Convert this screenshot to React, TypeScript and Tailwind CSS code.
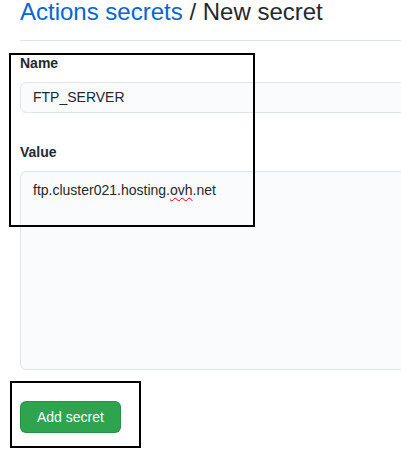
export default function App() {
  return (
    <div className="relative h-[455px] w-[401px] overflow-hidden bg-white font-['Liberation_Sans',Arial,sans-serif] text-[#24292e]">
      <div className="pl-5">
        <h1 className="border-b border-[#e1e4e8] pb-4 text-[24px] leading-none font-normal">
          <span className="text-[#0366d6]">Actions secrets</span> / New secret
        </h1>

        <form className="w-[440px]">
          <div className="mt-3">
            <label className="block text-[14px] leading-[21px] font-bold">Name</label>
            <div className="mt-2 h-[31px] rounded-md border border-[#e1e4e8] bg-[#fafbfc] px-3 text-[14px] leading-[29px]">
              FTP_SERVER
            </div>
          </div>

          <div className="mt-[29px]">
            <label className="block text-[14px] leading-[21px] font-bold">Value</label>
            <div className="mt-2 h-[199px] rounded-md border border-[#e1e4e8] bg-[#fafbfc] px-3 pt-2 text-[14px] leading-5">
              ftp.cluster021.hosting.
              <span className="underline decoration-red-600 decoration-wavy decoration-1 underline-offset-2">ovh</span>
              .net
            </div>
          </div>

          <button
            type="button"
            className="mt-[31px] h-8 rounded-md border border-[rgba(27,31,35,0.15)] bg-[#2ea44f] px-4 text-[14px] leading-5 text-white"
          >
            Add secret
          </button>
        </form>
      </div>

      {/* annotation boxes drawn over the screenshot */}
      <div className="pointer-events-none absolute top-[53px] left-[9px] h-[174px] w-[246px] border-2 border-black" />
      <div className="pointer-events-none absolute top-[381px] left-[10px] h-[67px] w-[131px] border-2 border-black" />
    </div>
  );
}
